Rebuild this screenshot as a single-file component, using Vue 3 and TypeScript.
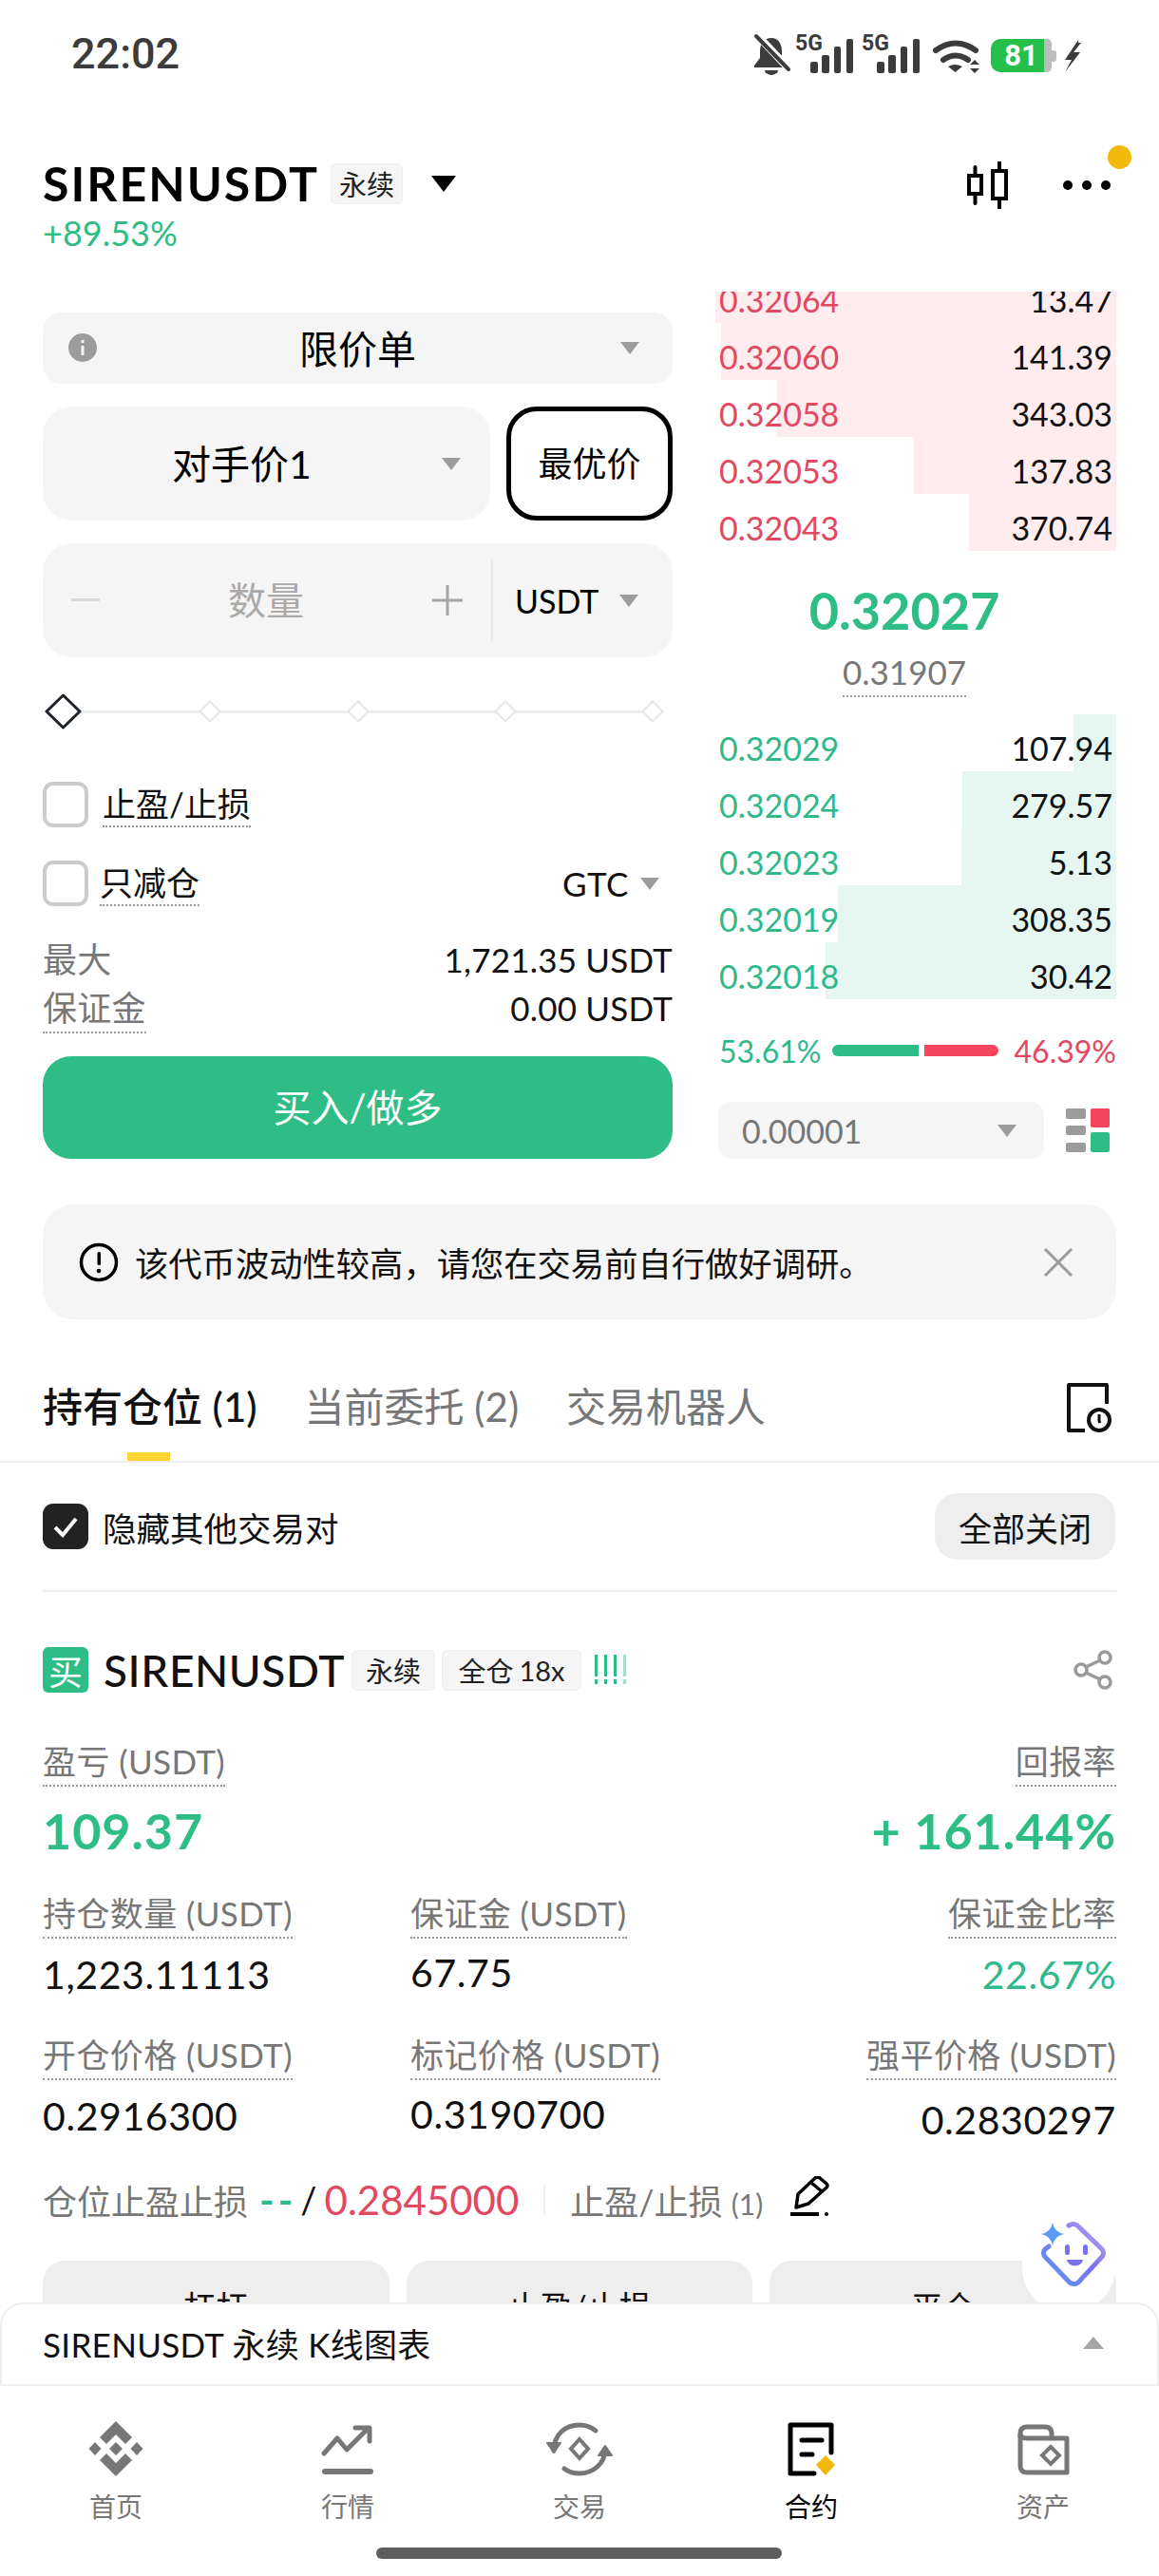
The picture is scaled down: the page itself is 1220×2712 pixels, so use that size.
<script setup lang="ts">
interface Level { p: string; a: string; w: number }
const asks: Level[] = [
  { p: '0.32064', a: '13.47', w: 422 },
  { p: '0.32060', a: '141.39', w: 416 },
  { p: '0.32058', a: '343.03', w: 357 },
  { p: '0.32053', a: '137.83', w: 213 },
  { p: '0.32043', a: '370.74', w: 155 },
]
const bids: Level[] = [
  { p: '0.32029', a: '107.94', w: 45 },
  { p: '0.32024', a: '279.57', w: 162 },
  { p: '0.32023', a: '5.13', w: 163 },
  { p: '0.32019', a: '308.35', w: 293 },
  { p: '0.32018', a: '30.42', w: 306 },
]
const marks = [0, 1, 2, 3, 4]
</script>

<template>
  <div class="app">
    <div class="status">
      <span class="time">22:02</span>
      <svg class="status-icons" width="345" height="52" viewBox="794 28 345 52">
        <path d="M813 37c-8 0-12 6-12 14v7l-6 8v2h35v-2l-6-8v-7c0-8-4-14-11-14z" fill="#3c3c3c" />
        <path d="M806 71a7 5 0 0 0 14 0z" fill="#3c3c3c" />
        <path d="M797 33l36 38" stroke="#fff" stroke-width="8" />
        <path d="M797 35l34 35" stroke="#3c3c3c" stroke-width="4" stroke-linecap="round" />
        <text x="838" y="50" class="g5">5G</text>
        <text x="908" y="50" class="g5">5G</text>
        <g fill="#3c3c3c">
          <rect x="854" y="62" width="8" height="12" rx="2" /><rect x="866" y="55" width="8" height="19" rx="2" />
          <rect x="879" y="46" width="7" height="28" rx="2" /><rect x="892" y="38" width="7" height="36" rx="2" />
          <rect x="924" y="62" width="8" height="12" rx="2" /><rect x="936" y="55" width="8" height="19" rx="2" />
          <rect x="949" y="46" width="7" height="28" rx="2" /><rect x="962" y="38" width="7" height="36" rx="2" />
          <path d="M999 67q7-4 15 0l-7.500 6z" />
          <path d="M1022 65l5-5 5 5zM1022 69l5 5 5-5z" />
        </g>
        <path d="M986 50q21-15 42 0M994 60q13-9 26 0" fill="none" stroke="#3c3c3c" stroke-width="6" stroke-linecap="round" />
        <path d="M1100 38h-46a10 10 0 0 0-10 10v15a10 10 0 0 0 10 10h46z" fill="#25c04a" />
        <path d="M1100 38h3a5 5 0 0 1 5 5v7h2a3 3 0 0 1 3 3v6a3 3 0 0 1-3 3h-2v6a5 5 0 0 1-5 5h-3z" fill="#bdbdbd" />
        <text x="1076" y="66" class="batt" text-anchor="middle">81</text>
        <path d="M1136 39l-14 21h7l-7 13 16-21h-7l8-10-3 0z" fill="#3c3c3c" />
      </svg>
    </div>

    <header class="head">
      <div>
        <div class="title-row">
          <h1 class="title">SIRENUSDT</h1>
          <span class="badge big">永续</span>
          <svg class="title-caret" width="26" height="17" viewBox="0 0 26 17"><path d="M0 0h26L13 17z" fill="#000" /></svg>
        </div>
        <div class="change">+89.53%</div>
      </div>
      <div class="head-icons">
        <svg width="46" height="50" viewBox="1017 168 46 50" fill="none" stroke="#000" stroke-width="4">
          <rect x="1021" y="183" width="13" height="19" />
          <rect x="1046" y="178" width="14" height="29" />
          <path d="M1027.500 174v9M1027.500 202v10M1053 168v10M1053 207v10" stroke-linecap="round" />
        </svg>
        <svg width="52" height="12" viewBox="0 0 52 12" fill="#000"><circle cx="6" cy="6" r="5" /><circle cx="26" cy="6" r="5" /><circle cx="46" cy="6" r="5" /></svg>
        <i class="notify" />
      </div>
    </header>

    <main class="trade">
      <section class="form">
        <div class="field select">
          <svg class="info" width="30" height="30" viewBox="0 0 30 30"><circle cx="15" cy="15" r="15" fill="#9c9c9c" /><rect x="13.500" y="13" width="3" height="10" fill="#f5f5f5" /><rect x="13.500" y="7" width="3" height="3" fill="#f5f5f5" /></svg>
          <span class="select-label">限价单</span>
          <i class="caret select-caret" />
        </div>
        <div class="price-row">
          <div class="field counter">
            <span>对手价1</span>
            <i class="caret counter-caret" />
          </div>
          <button class="best">最优价</button>
        </div>
        <div class="field qty">
          <svg class="pm" width="30" height="4" viewBox="0 0 30 4"><rect width="30" height="3" fill="#d9d9d9" /></svg>
          <span class="qty-label">数量</span>
          <svg class="plus" width="32" height="32" viewBox="0 0 32 32"><path d="M0 16h32M16 0v32" stroke="#a6a6a6" stroke-width="3" /></svg>
          <i class="qty-div" />
          <span class="unit">USDT</span>
          <i class="caret" />
        </div>
        <div class="slider">
          <i class="track" />
          <span v-for="m in marks" :key="m" class="mark">
            <svg v-if="m === 0" width="39" height="38" viewBox="0 0 39 38"><path d="M19.500 2L37 19 19.500 36 2 19z" fill="#fff" stroke="#1e2329" stroke-width="3" stroke-linejoin="round" /></svg>
            <svg v-else width="24" height="24" viewBox="0 0 24 24"><path d="M12 1.500L22.500 12 12 22.500 1.500 12z" fill="#fff" stroke="#e6e6e6" stroke-width="2" stroke-linejoin="round" /></svg>
          </span>
        </div>
        <div class="check-row first">
          <i class="check" />
          <span class="dotted check-text">止盈/止损</span>
        </div>
        <div class="check-row second">
          <i class="check" />
          <span class="dotted check-text tight">只减仓</span>
          <span class="gtc">GTC</span>
          <i class="caret gtc-caret" />
        </div>
        <div class="info-row top-info"><span class="muted">最大</span><span>1,721.35 USDT</span></div>
        <div class="info-row"><span class="muted dotted">保证金</span><span>0.00 USDT</span></div>
        <button class="buy">买入/做多</button>
      </section>

      <section class="book">
        <div class="asks">
          <div v-for="r in asks" :key="r.p" class="level">
            <i class="depth ask-depth" :style="{ width: r.w + 'px' }" />
            <span class="red">{{ r.p }}</span><span class="amount">{{ r.a }}</span>
          </div>
        </div>
        <div class="mid">
          <div class="last">0.32027</div>
          <div class="index dotted">0.31907</div>
        </div>
        <div class="bids">
          <div v-for="r in bids" :key="r.p" class="level">
            <i class="depth bid-depth" :style="{ width: r.w + 'px' }" />
            <span class="green">{{ r.p }}</span><span class="amount">{{ r.a }}</span>
          </div>
        </div>
        <div class="ratio">
          <span class="green">53.61%</span>
          <i class="ratio-g" /><i class="ratio-r" />
          <span class="red">46.39%</span>
        </div>
        <div class="book-foot">
          <div class="tick"><span>0.00001</span><i class="caret" /></div>
          <svg width="46" height="46" viewBox="0 0 46 46">
            <g fill="#9c9c9c"><rect y="0" width="21" height="11" rx="2" /><rect y="18" width="21" height="10" rx="2" /><rect y="36" width="21" height="10" rx="2" /></g>
            <rect x="26" y="0" width="20" height="20" rx="2" fill="#f6465d" />
            <rect x="26" y="25" width="20" height="21" rx="2" fill="#2ebd85" />
          </svg>
        </div>
      </section>
    </main>

    <div class="notice">
      <svg width="42" height="42" viewBox="0 0 42 42"><circle cx="21" cy="21" r="18.500" fill="none" stroke="#000" stroke-width="3.500" /><rect x="19.500" y="10" width="3.500" height="14" rx="1.500" /><circle cx="21" cy="30" r="2.300" /></svg>
      <span class="notice-text">该代币波动性较高，请您在交易前自行做好调研。</span>
      <svg width="30" height="30" viewBox="0 0 30 30"><path d="M1 1l28 28M29 1L1 29" stroke="#9a9a9a" stroke-width="3" /></svg>
    </div>

    <nav class="tabs">
      <span class="tab active">持有仓位 (1)</span>
      <span class="tab">当前委托 (2)</span>
      <span class="tab">交易机器人</span>
      <svg class="tab-icon" width="48" height="52" viewBox="1123 1456 48 52" fill="none" stroke="#111" stroke-width="4">
        <path d="M1165 1478v-20h-40v48h17" stroke-linejoin="round" />
        <circle cx="1157" cy="1495" r="11" />
        <path d="M1157 1489v7l1 2" stroke-width="3" />
      </svg>
    </nav>

    <div class="hide-row">
      <span class="hide-left">
        <svg width="48" height="48" viewBox="0 0 48 48"><rect width="48" height="48" rx="11" fill="#222" /><path d="M13 25l8 8 14-17" fill="none" stroke="#fff" stroke-width="4" /></svg>
        隐藏其他交易对
      </span>
      <button class="close-all">全部关闭</button>
    </div>

    <article class="position">
      <div class="pos-head">
        <span class="side">买</span>
        <span class="pos-name">SIRENUSDT</span>
        <span class="badge one">永续</span>
        <span class="badge two">全仓 <small>18x</small></span>
        <svg class="risk" width="36" height="32" viewBox="0 0 36 32" fill="#2ebd85">
          <g><rect x="1" width="3" height="23" /><rect x="1" y="26" width="3" height="5" /></g>
          <g><rect x="11" width="3" height="23" /><rect x="11" y="26" width="3" height="5" /></g>
          <g><rect x="21" width="3" height="23" /><rect x="21" y="26" width="3" height="5" /></g>
          <g fill="#a9dcc6"><rect x="31" width="3" height="23" /><rect x="31" y="26" width="3" height="5" /></g>
        </svg>
        <svg class="share" width="42" height="42" viewBox="0 0 42 42" fill="none" stroke="#9a9a9a" stroke-width="3.500">
          <circle cx="33" cy="8" r="6" /><circle cx="8" cy="21" r="6" /><circle cx="33" cy="34" r="6" />
          <path d="M13 18l15-7M13 24l15 7" />
        </svg>
      </div>

      <div class="stats">
        <div class="stat wide-gap">
          <span class="label">盈亏 (USDT)</span>
          <span class="pnl">109.37</span>
        </div>
        <div class="stat end wide-gap pnl-right">
          <span class="label">回报率</span>
          <span class="pnl">+ 161.44%</span>
        </div>
        <div class="stat"><span class="label">持仓数量 (USDT)</span><span class="val">1,223.11113</span></div>
        <div class="stat"><span class="label">保证金 (USDT)</span><span class="val hi">67.75</span></div>
        <div class="stat end"><span class="label">保证金比率</span><span class="val green">22.67%</span></div>
        <div class="stat"><span class="label">开仓价格 (USDT)</span><span class="val">0.2916300</span></div>
        <div class="stat"><span class="label">标记价格 (USDT)</span><span class="val hi">0.3190700</span></div>
        <div class="stat end"><span class="label">强平价格 (USDT)</span><span class="val lo">0.2830297</span></div>
      </div>

      <div class="tp-row">
        <span class="muted">仓位止盈止损</span>
        <span class="green dashes">--</span>
        <span class="slash">/</span>
        <span class="red tp-val">0.2845000</span>
        <i class="tp-div" />
        <span class="muted">止盈/止损 <small>(1)</small></span>
        <svg class="edit" width="42" height="42" viewBox="0 0 42 42" fill="none" stroke="#000" stroke-width="3.500">
          <path d="M7 33L9 19 27 2q2-2 5 0l7 6q2 2 0 4L20 29z" stroke-linejoin="round" />
          <path d="M23 7l11 9" />
          <path d="M1 40h30" stroke-width="4" />
          <circle cx="39" cy="40" r="2" fill="#000" stroke="none" />
        </svg>
      </div>

      <div class="actions">
        <button>杠杆</button>
        <button>止盈/止损</button>
        <button>平仓</button>
      </div>
    </article>

    <div class="bot">
      <svg width="68" height="69" viewBox="1096 2338 68 69" fill="none">
        <defs>
          <linearGradient id="botg" x1="0" y1="1" x2="1" y2="0">
            <stop offset="0" stop-color="#5b9bf8" />
            <stop offset="0.55" stop-color="#7a72ee" />
            <stop offset="1" stop-color="#c4a6ee" />
          </linearGradient>
        </defs>
        <path d="M1125 2343q5-3 9 0l26 25q3 4 0 8l-25 27q-4 3-9 0l-26-27q-3-4 0-8l4-3" stroke="url(#botg)" stroke-width="5" stroke-linecap="round" />
        <path d="M1108 2340q2 10 12 12q-10 2-12 12q-2-10-12-12q10-2 12-12z" fill="#5b9bf8" />
        <rect x="1121" y="2363" width="5" height="11" rx="2.500" fill="#7a72ee" />
        <rect x="1140" y="2363" width="5" height="11" rx="2.500" fill="#7a72ee" />
        <path d="M1123 2379h17a8.500 6.500 0 0 1-17 0z" fill="#7a72ee" />
      </svg>
    </div>

    <footer class="dock">
      <div class="sheet">
        <span>SIRENUSDT 永续 K线图表</span>
        <svg width="22" height="13" viewBox="0 0 22 13"><path d="M11 0l11 13H0z" fill="#a6a6a6" /></svg>
      </div>
      <div class="nav">
        <div class="nav-item">
          <svg width="60" height="60" viewBox="92 2548 60 60" fill="#777">
            <path d="M122 2549l17 17-7 7-10-10-10 10-7-7zM122 2607l17-17-7-7-10 10-10-10-7 7zM122 2571l7 7-7 7-7-7zM100 2571l6.500 7-6.500 7-6.500-7zM144 2571l6.500 7-6.500 7-6.500-7z" />
          </svg>
          <span>首页</span>
        </div>
        <div class="nav-item">
          <svg width="60" height="60" viewBox="336 2548 60 60" fill="none" stroke="#777" stroke-width="5">
            <path d="M341 2583l14-16 10 12 22-22M374 2556h15v14" stroke-linejoin="round" stroke-linecap="round" />
            <path d="M342 2602h48" stroke-width="6" stroke-linecap="round" />
          </svg>
          <span>行情</span>
        </div>
        <div class="nav-item">
          <svg width="70" height="60" viewBox="575 2548 70 60" fill="none" stroke="#777" stroke-width="5">
            <path d="M583 2580c0-18 13-27 27-27 7 0 12 2 17 6M637 2578c0 16-13 26-27 26-7 0-12-2-16-5" stroke-linecap="round" />
            <path d="M576 2572l7 10 7-10zM630 2585l7-10 7 10z" fill="#777" stroke-width="2" stroke-linejoin="round" />
            <path d="M610 2568l9 10-9 10-9-10z" stroke-width="4" />
          </svg>
          <span>交易</span>
        </div>
        <div class="nav-item active">
          <svg width="60" height="60" viewBox="824 2548 60 60" fill="none" stroke="#000" stroke-width="5">
            <path d="M857 2604h-25v-51h43v29" stroke-linecap="round" stroke-linejoin="round" />
            <path d="M844 2569h21M844 2584h11" stroke-linecap="round" />
            <path d="M869 2585l10 10-10 11-10-11z" fill="#f0b90b" stroke="none" />
          </svg>
          <span>合约</span>
        </div>
        <div class="nav-item">
          <svg width="60" height="60" viewBox="1069 2548 60 60" fill="none" stroke="#777" stroke-width="5">
            <path d="M1075 2566v-4q0-7 7-7h19q7 0 7 7v5" />
            <path d="M1075 2562v34q0 7 7 7h42v-36h-42q-7 0-7-5" stroke-linejoin="round" />
            <path d="M1107 2576l9 9-9 9-9-9z" stroke-width="4" />
          </svg>
          <span>资产</span>
        </div>
        <i class="home-bar" />
      </div>
    </footer>
  </div>
</template>

<style>
html, body { margin: 0; background: #fff; }
</style>

<style scoped>
.app {
  position: relative;
  width: 1220px;
  height: 2712px;
  overflow: hidden;
  background: #fff;
  color: #111;
  font-family: Lato, "Noto Sans CJK SC", sans-serif;
  font-size: 34px;
}
button { font-family: inherit; border: 0; padding: 0; color: #111; }
small { font-size: inherit; }
.status { height: 110px; display: flex; align-items: center; justify-content: space-between; padding: 0 82px 0 75px; }
.time { font-family: Roboto, sans-serif; font-size: 45px; font-weight: 500; color: #3c3c3c; margin-top: 2px; }
.status-icons { margin-top: 4px; }
.g5 { font: 700 23px Roboto, sans-serif; fill: #3c3c3c; }
.batt { font: 700 31px Roboto, sans-serif; fill: #fff; }

.head { height: 197px; box-sizing: border-box; padding: 59px 50px 0 45px; display: flex; justify-content: space-between; }
.title-row { display: flex; align-items: center; height: 48px; }
.title { margin: 0; font-size: 50px; line-height: 48px; font-weight: 700; color: #000; letter-spacing: 2px; }
.badge { display: inline-flex; align-items: center; justify-content: center; height: 43px; padding: 0; font-size: 29px; background: #f5f5f5; border: 1px solid #eee; border-radius: 6px; color: #222; box-sizing: border-box; white-space: nowrap; }
.badge.big { margin-left: 12px; width: 76px; }
.title-caret { margin-left: 30px; }
.change { margin-top: 9px; font-size: 36px; line-height: 38px; color: #2ebd85; }
.head-icons { position: relative; display: flex; align-items: center; gap: 56px; height: 50px; margin-top: 1px; }
.notify { position: absolute; right: -21px; top: -17px; width: 25px; height: 25px; border-radius: 50%; background: #f0b90b; }

.trade { display: grid; grid-template-columns: 663px 422px; column-gap: 45px; padding: 0 45px; }
.form { padding-top: 22px; display: flex; flex-direction: column; }
.field { background: #f5f5f5; display: flex; align-items: center; position: relative; box-sizing: border-box; }
.caret { display: block; width: 0; height: 0; border-left: 10px solid transparent; border-right: 10px solid transparent; border-top: 13px solid #9c9c9c; }
.select { height: 75px; border-radius: 20px; justify-content: center; padding-bottom: 4px; }
.info { position: absolute; left: 27px; top: 22px; }
.select-label { font-size: 41px; color: #000; }
.select-caret { position: absolute; right: 35px; top: 31px; }
.price-row { display: flex; gap: 17px; margin-top: 24px; height: 120px; }
.counter { flex: 1; border-radius: 30px; justify-content: center; font-size: 41px; color: #000; padding-right: 52px; padding-bottom: 4px; }
.counter-caret { position: absolute; right: 31px; top: 54px; }
.best { width: 175px; background: #fff; border: 5px solid #000; border-radius: 32px; font-size: 36px; color: #000; box-sizing: border-box; padding-bottom: 4px; }
.qty { height: 120px; margin-top: 24px; border-radius: 30px; padding-left: 30px; }
.qty-label { font-size: 40px; color: #a9a9a9; margin-left: 135px; margin-bottom: 4px; }
.plus { margin-left: 135px; }
.qty-div { position: absolute; left: 472px; top: 17px; width: 2px; height: 86px; background: #e8e8e8; }
.unit { margin-left: 55px; font-size: 34px; color: #000; }
.qty .caret { margin-left: 22px; }
.slider { position: relative; display: flex; justify-content: space-between; align-items: center; height: 38px; margin: 38px 1px 0; }
.track { position: absolute; left: 20px; right: 20px; top: 18px; height: 3px; background: #eceef0; }
.mark { position: relative; width: 40px; display: flex; justify-content: center; align-items: center; }
.check-row { display: flex; align-items: center; height: 48px; font-size: 35px; color: #111; }
.check-row.first { margin-top: 55px; }
.check-row.second { margin-top: 35px; }
.check { width: 48px; height: 48px; box-sizing: border-box; border: 4px solid #ccc; border-radius: 11px; }
.dotted { border-bottom: 2px dotted #999; }
.check-text { margin-left: 15px; line-height: 46px; margin-top: 0; }
.check-text.tight { margin-left: 12px; }
.gtc { margin-left: auto; font-size: 35px; letter-spacing: .5px; }
.gtc-caret { margin: 0 14px 0 12px; border-top-color: #9c9c9c; }
.info-row { display: flex; justify-content: space-between; font-size: 35px; line-height: 50px; align-items: flex-start; letter-spacing: .2px; }
.top-info { margin-top: 31px; margin-bottom: 1px; }
.info-row .muted { font-size: 36px; }
.muted { color: #777; }
.buy { margin-top: 24px; height: 108px; border-radius: 30px; background: #2ebd85; color: #fff; font-size: 40px; padding-bottom: 4px; }

.book { display: flex; flex-direction: column; }
.asks { height: 273px; overflow: hidden; display: flex; flex-direction: column; justify-content: flex-end; }
.bids { height: 300px; overflow: hidden; }
.level { position: relative; flex: none; height: 60px; box-sizing: border-box; padding: 13px 4px 0; display: flex; justify-content: space-between; line-height: 46px; font-size: 34px; }
.level span { position: relative; }
.depth { position: absolute; right: 0; top: 0; bottom: 0; }
.ask-depth { background: #ffecee; }
.bid-depth { background: #e6f6f0; }
.red { color: #e2485f; }
.green { color: #2fb88a; }
.amount { color: #111; }
.mid { height: 172px; display: flex; flex-direction: column; align-items: center; padding-right: 24px; }
.last { margin-top: 33px; font-size: 54px; line-height: 60px; font-weight: 700; color: #2ebd85; }
.index { margin-top: 9px; font-size: 35px; line-height: 50px; color: #777; }
.ratio { margin-top: 29px; height: 50px; padding-left: 4px; display: flex; align-items: center; font-size: 32px; }
.ratio-g { width: 91px; height: 12px; margin-left: 12px; background: #2ebd85; border-radius: 6px 0 0 6px; }
.ratio-r { width: 78px; height: 12px; margin-left: 6px; background: #f6465d; border-radius: 0 6px 6px 0; }
.ratio .red { margin-left: auto; }
.book-foot { margin-top: 29px; padding-left: 3px; display: flex; align-items: center; justify-content: space-between; padding-right: 7px; }
.tick { width: 343px; height: 60px; box-sizing: border-box; padding: 0 29px 0 25px; border-radius: 14px; background: #f5f5f5; display: flex; align-items: center; justify-content: space-between; color: #777; font-size: 34px; }

.notice { height: 121px; margin: 48px 45px 0; padding: 0 46px 0 38px; box-sizing: border-box; border-radius: 32px; background: #f5f5f5; display: flex; align-items: center; }
.notice-text { flex: 1; margin-left: 17px; font-size: 35.300px; color: #111; }

.tabs { position: relative; height: 151px; box-sizing: border-box; border-bottom: 2px solid #eee; padding: 67px 0 0 45px; display: flex; gap: 50px; font-size: 42px; line-height: 50px; color: #777; align-items: flex-start; }
.tab { position: relative; height: 82px; white-space: nowrap; }
.tab.active { color: #111; font-weight: 500; }
.tab.active::after { content: ""; position: absolute; left: 89px; bottom: 0; width: 45px; height: 9px; background: #fcd535; }
.tab-icon { position: absolute; left: 1123px; top: 67px; }

.hide-row { height: 134px; margin: 0 45px; display: flex; align-items: center; justify-content: space-between; border-bottom: 2px solid #eee; }
.hide-left { display: flex; align-items: center; gap: 15px; font-size: 35.500px; }
.close-all { width: 190px; height: 70px; border-radius: 24px; background: #eee; font-size: 35px; margin-right: 1px; }

.position { padding: 57px 45px 0; }
.pos-head { display: flex; align-items: center; height: 50px; margin-bottom: 46px; }
.side { width: 48px; height: 48px; border-radius: 6px; background: #2ebd85; color: #fff; display: flex; align-items: center; justify-content: center; font-size: 36px; }
.pos-name { margin-left: 16px; font-size: 46px; font-weight: 500; color: #111; letter-spacing: .6px; }
.badge.one { width: 88px; margin-left: 7px; }
.badge.two { width: 147px; margin-left: 7px; gap: 6px; }
.badge small { font-size: 29px; }
.risk { margin-left: 13px; }
.share { margin-left: auto; margin-right: 3px; }
.stats { display: grid; grid-template-columns: 387px 1fr auto; row-gap: 34px; }
.stat { display: flex; flex-direction: column; align-items: flex-start; }
.stat.end { align-items: flex-end; grid-column: 3; }
.wide-gap { margin-bottom: 3px; }
.pnl-right { grid-column: 3; }
.stat.wide-gap:first-child { grid-column: 1 / span 2; }
.label { font-size: 35px; line-height: 50px; color: #777; border-bottom: 2px dotted #999; letter-spacing: .4px; }
.pnl { margin-top: 21px; font-size: 52px; line-height: 50px; font-weight: 700; color: #2ebd85; letter-spacing: 1px; }
.val { margin-top: 13px; font-size: 41px; line-height: 50px; color: #111; letter-spacing: .6px; }
.val.green { color: #2fb88a; }
.val.hi { margin-top: 11px; }
.val.lo { margin-top: 17px; }
.tp-row { margin-top: 34px; display: flex; align-items: center; height: 50px; font-size: 36px; }
.dashes { margin-left: 12px; font-size: 42px; letter-spacing: 4px; font-weight: 700; }
.slash { margin-left: 4px; color: #111; font-size: 38px; }
.tp-val { margin-left: 8px; font-size: 42px; }
.tp-div { width: 2px; height: 32px; background: #eee; margin: 0 26px; }
.tp-row small { font-size: 30px; }
.edit { margin-left: 28px; margin-top: -8px; }
.actions { margin-top: 39px; display: grid; grid-template-columns: repeat(3, 1fr); gap: 18px; }
.actions button { height: 90px; border-radius: 24px; background: #eee; font-size: 34px; color: #111; padding-top: 4px; padding-bottom: 0; display: block; }

.bot { position: absolute; left: 1076px; top: 2325px; width: 98px; height: 110px; background: #fff; border-radius: 48px; }
.bot svg { position: absolute; left: 20px; top: 13px; }

.dock { position: absolute; left: 0; right: 0; bottom: 0; background: #fff; }
.sheet { height: 88px; box-sizing: border-box; border: 2px solid #eee; border-radius: 24px 24px 0 0; padding: 0 56px 4px 43px; display: flex; align-items: center; justify-content: space-between; font-size: 35px; letter-spacing: .3px; color: #111; background: #fff; }
.nav { position: relative; height: 200px; box-sizing: border-box; padding-top: 36px; display: grid; grid-template-columns: repeat(5, 1fr); align-items: start; }
.nav-item { display: flex; flex-direction: column; align-items: center; gap: 11px; font-size: 28px; line-height: 40px; color: #777; }
.nav-item.active { color: #000; }
.home-bar { position: absolute; left: 396px; bottom: 18px; width: 427px; height: 12px; border-radius: 6px; background: #5e5e5e; }
</style>
